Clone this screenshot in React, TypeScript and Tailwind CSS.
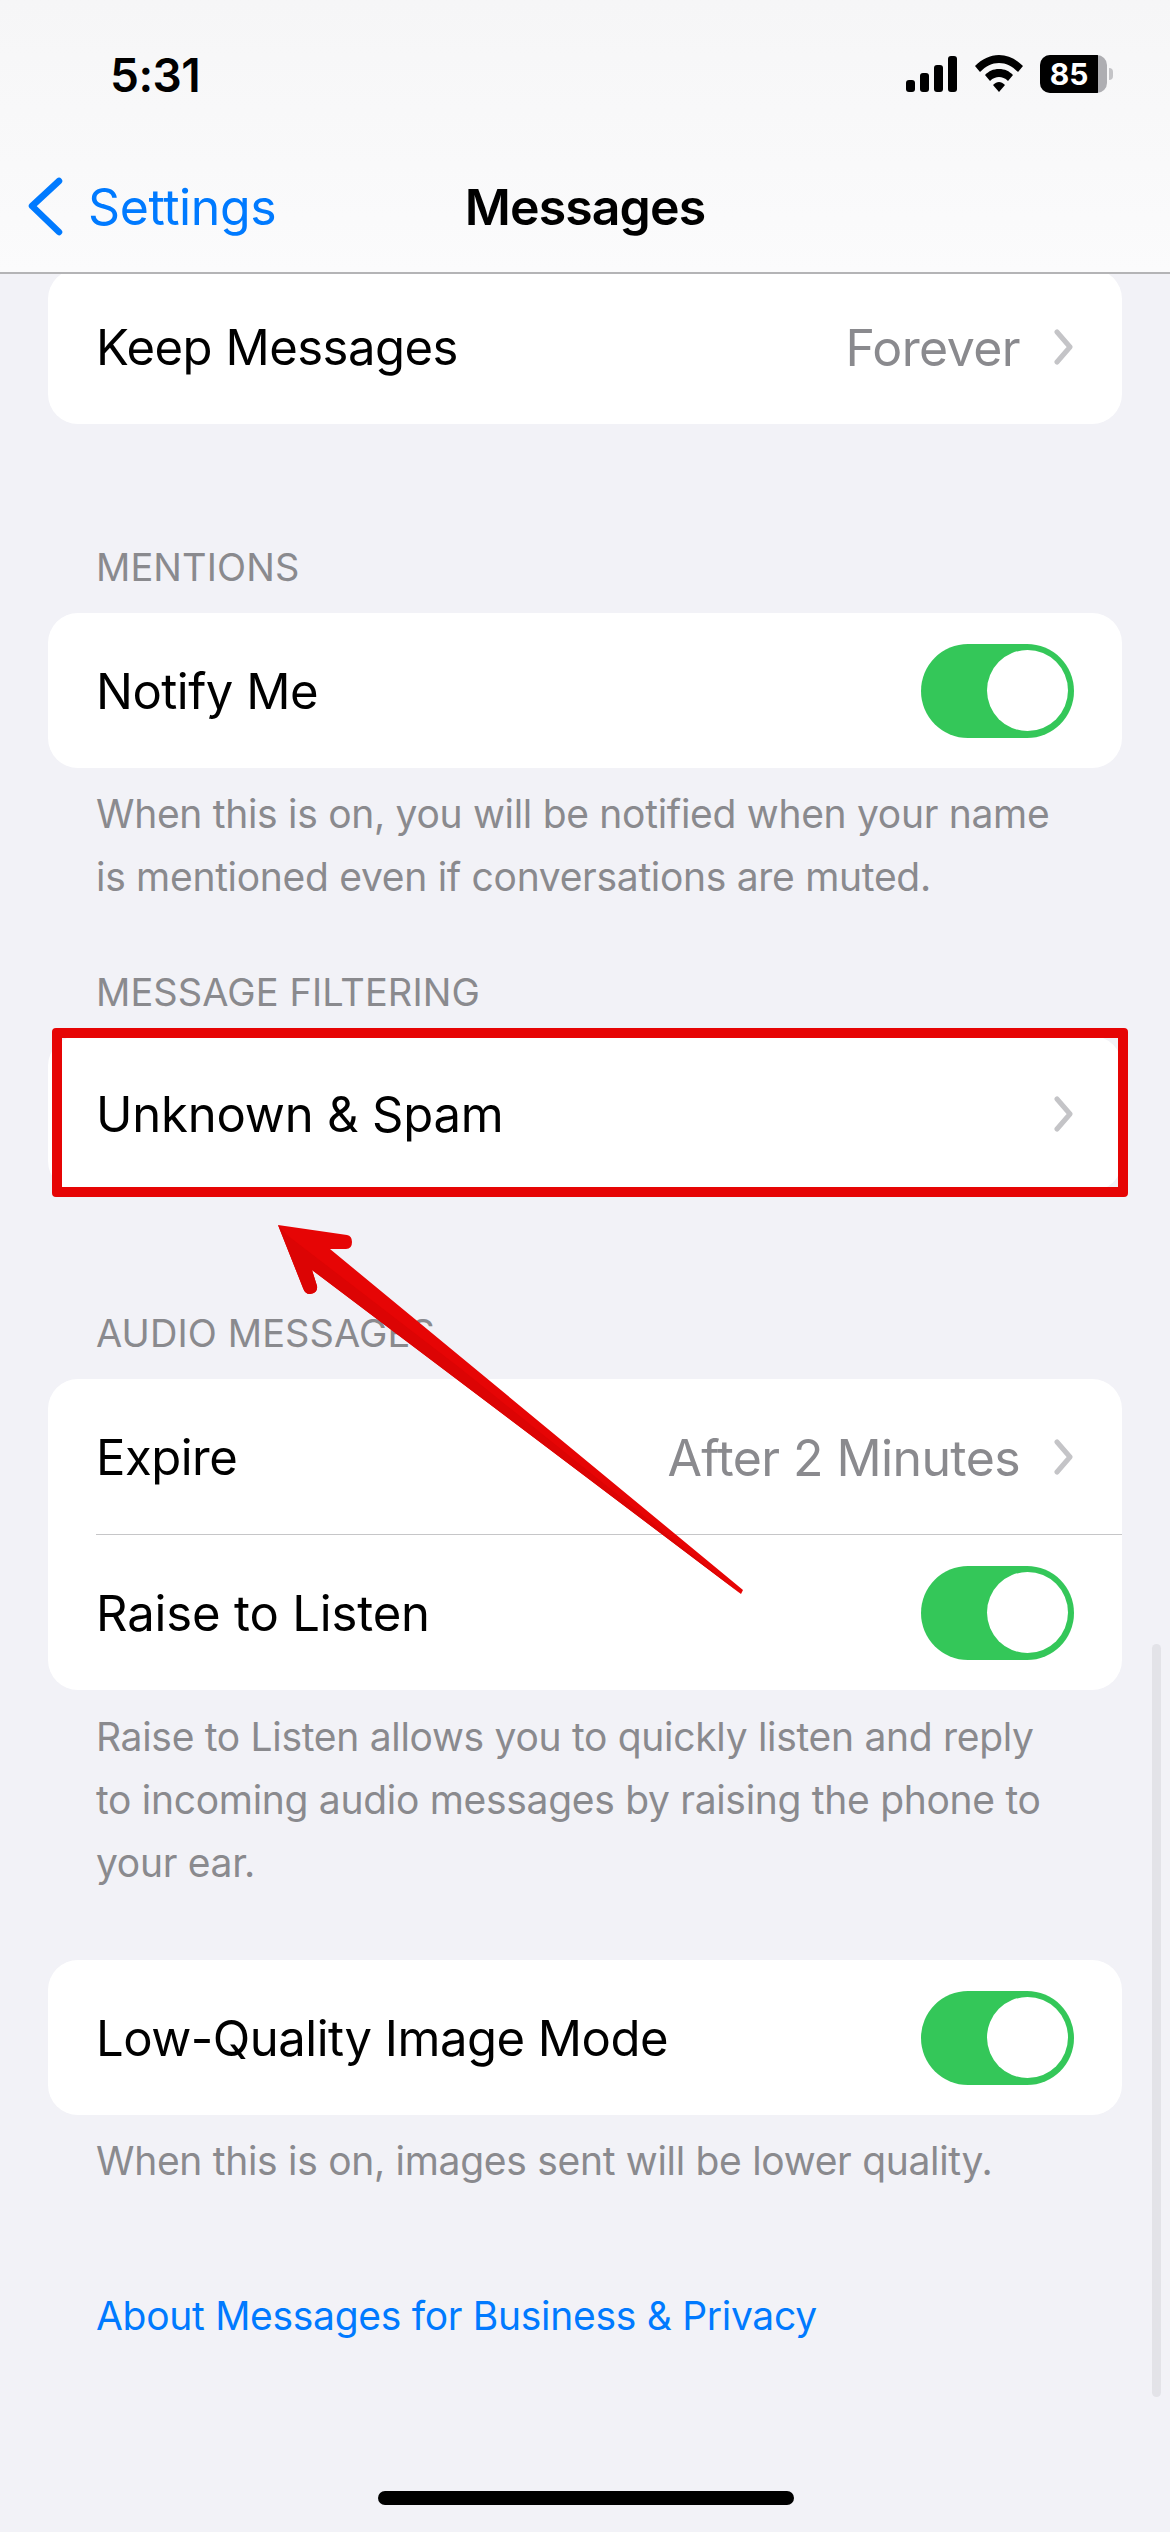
import React from 'react';

const Chevron = () => (
    <svg width="20" height="36" viewBox="0 0 20 36" fill="none" className="ml-[34px] shrink-0">
        <path d="M3 3 L16 18 L3 33" stroke="#c4c4c7" strokeWidth="5" strokeLinecap="round" strokeLinejoin="round" />
    </svg>
);

const Toggle = () => (
    <div className="flex h-[94px] w-[153px] items-center justify-end rounded-full bg-[#34c759] pr-[6px]">
        <div className="h-[81px] w-[81px] rounded-full bg-white" />
    </div>
);

const Row: React.FC<{ label: string; value?: string; chevron?: boolean; toggle?: boolean; tracking?: string }> = ({
    label,
    value,
    chevron,
    toggle,
    tracking = 'tracking-[-0.5px]',
}) => (
    <div className="flex h-[155px] items-center pl-[48px] pr-[48px]">
        <span className={`pt-[2px] text-[49px] leading-none text-black ${tracking}`}>{label}</span>
        <div className="flex-1" />
        {value && <span className="pt-[2px] text-[50px] leading-none tracking-[-0.6px] text-[#8a8a8e]">{value}</span>}
        {chevron && <Chevron />}
        {toggle && <Toggle />}
    </div>
);

const Label: React.FC<{ children: React.ReactNode; className?: string }> = ({ children, className }) => (
    <div className={`px-[96px] text-[38px] leading-[44px] tracking-[0.1px] text-[#8a8a8e] ${className ?? ''}`}>{children}</div>
);

const Note: React.FC<{ children: React.ReactNode; className?: string }> = ({ children, className }) => (
    <div className={`px-[96px] text-[39px] leading-[63px] tracking-[-0.3px] text-[#8a8a8e] ${className ?? ''}`}>{children}</div>
);

const App: React.FC = () => {
    return (
        <div className="relative h-[2532px] w-[1170px] overflow-hidden bg-[#f2f2f7] font-['Inter',sans-serif]">
            {/* nav bar */}
            <div className="relative z-10 h-[274px] border-b-2 border-[#b4b4b6] bg-gradient-to-b from-[#f6f6f7] to-[#fbfbfc]">
                <div className="flex h-[150px] items-center justify-between pl-[110px] pr-[63px]">
                    <span className="text-[46px] font-semibold leading-none tracking-[-0.5px] text-black">5:31</span>
                    <div className="relative mb-[3px] flex items-center">
                        <svg width="52" height="36" viewBox="0 0 52 36">
                            <rect x="0" y="24" width="9" height="12" rx="3" />
                            <rect x="14" y="17" width="9" height="19" rx="3" />
                            <rect x="28" y="9" width="9" height="27" rx="3" />
                            <rect x="42" y="0" width="9" height="36" rx="3" />
                        </svg>
                        <svg width="50" height="37" viewBox="0 0 50 37" className="ml-[16px]">
                            <path d="M25 0 C34 0 42 4 49 11 L44 17 C38 11 32 8 25 8 C18 8 12 11 6 17 L1 11 C8 4 16 0 25 0 Z" />
                            <path d="M25 14 C31 14 35 16 39 20 L34 26 C31 23 28 22 25 22 C22 22 19 23 16 26 L11 20 C15 16 19 14 25 14 Z" />
                            <path d="M25 27 C27 27 29 28 31 30 L25 37 L19 30 C21 28 23 27 25 27 Z" />
                        </svg>
                        <div className="ml-[16px] flex h-[38px] w-[67px] overflow-hidden rounded-[10px] bg-[#aeaeb2]">
                            <div className="flex w-[58px] items-center justify-center bg-black text-[30px] font-bold leading-none text-white">85</div>
                        </div>
                        <div className="absolute -right-[6px] h-[12px] w-[4px] rounded-r-full bg-[#c4c4c7]" />
                    </div>
                </div>
                <div className="relative flex h-[114px] items-center justify-center">
                    <div className="absolute left-[27px] flex items-center">
                        <svg width="36" height="60" viewBox="0 0 36 60" fill="none">
                            <path d="M32 4 L5 29 L32 55" stroke="#007aff" strokeWidth="6.5" strokeLinecap="round" strokeLinejoin="round" />
                        </svg>
                        <span className="ml-[25px] text-[50px] leading-none tracking-[-0.4px] text-[#007aff]">Settings</span>
                    </div>
                    <span className="text-[50px] font-semibold leading-none tracking-[-0.9px] text-black">Messages</span>
                </div>
            </div>

            {/* list */}
            <div className="-mt-[5px]">
                <div className="mx-[48px] rounded-[30px] bg-white">
                    <Row label="Keep Messages" value="Forever" chevron />
                </div>

                <Label className="mt-[121px]">MENTIONS</Label>
                <div className="mx-[48px] mt-[24px] rounded-[30px] bg-white">
                    <Row label="Notify Me" toggle />
                </div>
                <Note className="mt-[14px]">
                    When this is on, you will be notified when your name
                    <br />
                    is mentioned even if conversations are muted.
                </Note>

                <Label className="mt-[62px]">MESSAGE FILTERING</Label>
                <div className="mx-[48px] mt-[22px] rounded-[30px] bg-white">
                    <Row label="Unknown &amp; Spam" chevron tracking="tracking-[-0.2px]" />
                </div>

                <Label className="mt-[120px]">AUDIO MESSAGES</Label>
                <div className="mx-[48px] mt-[24px] rounded-[30px] bg-white">
                    <Row label="Expire" value="After 2 Minutes" chevron />
                    <div className="ml-[48px] h-[1px] bg-[#c6c6c8]" />
                    <Row label="Raise to Listen" toggle tracking="tracking-[-0.15px]" />
                </div>
                <Note className="mt-[15px]">
                    Raise to Listen allows you to quickly listen and reply
                    <br />
                    to incoming audio messages by raising the phone to
                    <br />
                    your ear.
                </Note>

                <div className="mx-[48px] mt-[66px] rounded-[30px] bg-white">
                    <Row label="Low-Quality Image Mode" toggle />
                </div>
                <Note className="mt-[14px]">When this is on, images sent will be lower quality.</Note>

                <div className="mt-[92px] px-[96px] text-[39px] leading-[63px] tracking-[-0.3px] text-[#007aff]">
                    About Messages for Business &amp; Privacy
                </div>
            </div>

            {/* scroll indicator */}
            <div className="absolute left-[1152px] top-[1644px] h-[753px] w-[9px] rounded-full bg-[#e3e3e8]" />
            {/* home indicator */}
            <div className="absolute bottom-[27px] left-[378px] h-[14px] w-[416px] rounded-full bg-black" />

            {/* annotation */}
            <div className="absolute left-[52px] top-[1028px] h-[169px] w-[1076px] rounded-[4px] border-[10px] border-[#e60505]" />
            <svg className="absolute left-0 top-0" width="1170" height="2532" viewBox="0 0 1170 2532">
                <path
                    d="M278 1225 L347 1235 Q352 1236 352 1242 Q352 1249 346 1249 L330 1249 L743 1590 L741 1594 L312 1270 L317 1286 Q318 1293 310 1294 Q305 1294 303 1288 Z"
                    fill="#e60505"
                />
                <path d="M278 1225 L287 1235 L460 1368 L741 1594 L312 1270 L317 1286 Q318 1293 310 1294 Q305 1294 303 1288 Z" fill="#dc0404" />
            </svg>
        </div>
    );
};

export default App;
